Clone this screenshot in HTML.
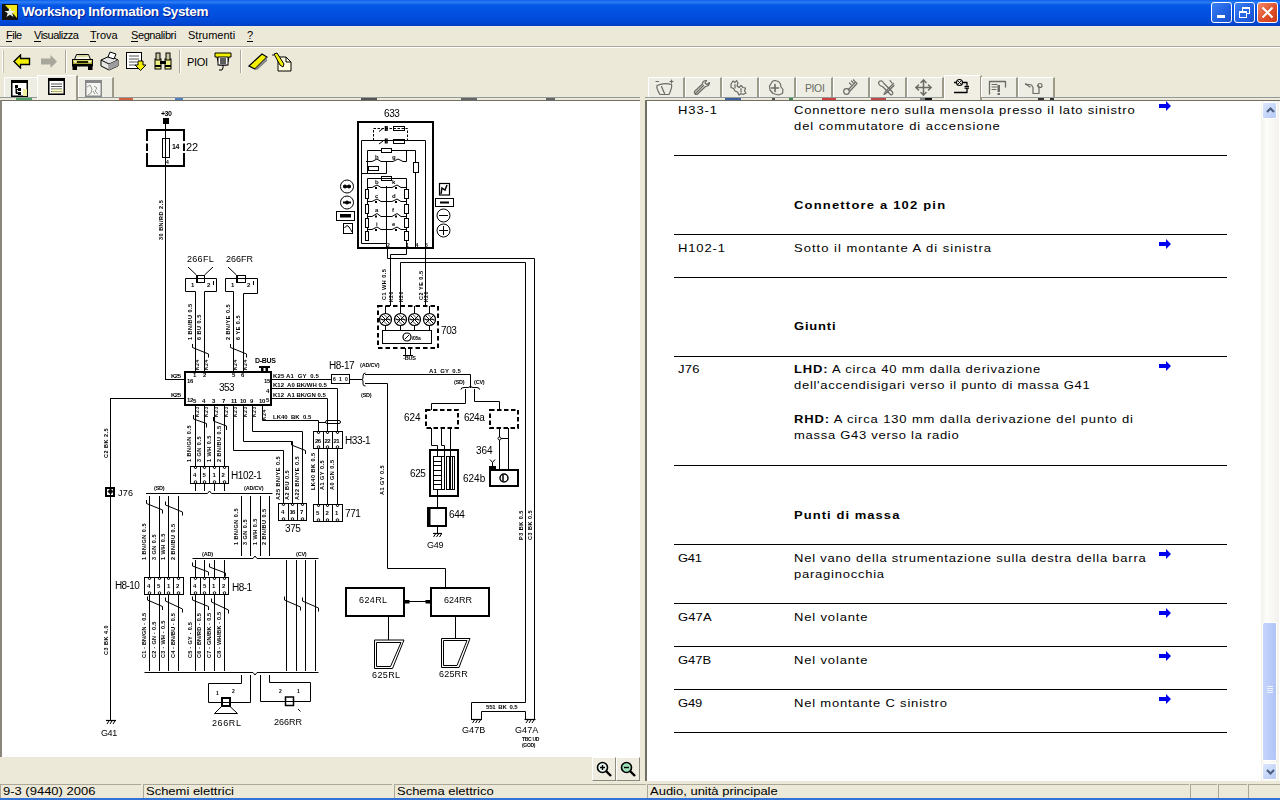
<!DOCTYPE html>
<html><head><meta charset="utf-8">
<style>
*{margin:0;padding:0;box-sizing:border-box}
html,body{width:1280px;height:800px;overflow:hidden;-webkit-font-smoothing:antialiased;background:#ECE9D8;font-family:"Liberation Sans",sans-serif;position:relative}
.a{position:absolute}
#title{left:0;top:0;width:1280px;height:26px;background:linear-gradient(#0A5FEA 0%,#2E7DF6 8%,#0558E6 20%,#0250E0 50%,#0049D6 85%,#003FC4 100%)}
#title .t{left:22px;top:4px;color:#fff;font-weight:bold;font-size:13.5px;letter-spacing:-0.35px;text-shadow:1px 1px 0 #0A1E8C;white-space:nowrap}
.menu{top:29px;font-size:11px;color:#000;white-space:nowrap}
.menu u{text-decoration:none;border-bottom:1px solid #000}
.sep{background:#A0A0A0}
.rt{font-family:"Liberation Sans",sans-serif;font-size:11.5px;color:#000;white-space:nowrap}
.rt b{font-weight:bold}
.hl{left:674px;width:553px;height:2px;background:#000}
.arr{width:12px;height:10px}
.sb{top:784px;height:14px;border-top:1px solid #ACA899;border-left:1px solid #ACA899;font-size:11px;color:#000;white-space:nowrap;padding-left:2px;line-height:13px}
</style></head><body>
<div id="title" class="a">
  <svg class="a" style="left:2px;top:4px" width="16" height="16" viewBox="0 0 16 16"><rect x="0" y="0" width="16" height="16" fill="#111"/><polygon points="3,1 15,1 15,14" fill="#F2E81A"/><polygon points="8,3 9.5,7 13.5,7 10.3,9.3 11.5,13 8,10.8 4.5,13 5.7,9.3 2.5,7 6.5,7" fill="#E8EEE0"/></svg>
  <div class="a t">Workshop Information System</div>
  <!-- window buttons -->
  <div class="a" style="left:1211px;top:2px;width:21px;height:21px;border:1px solid #fff;border-radius:3px;background:linear-gradient(135deg,#3C81F3,#1F5FE0 60%,#1A4FC8)"><div class="a" style="left:5px;top:12px;width:8px;height:3px;background:#fff"></div></div>
  <div class="a" style="left:1234px;top:2px;width:21px;height:21px;border:1px solid #fff;border-radius:3px;background:linear-gradient(135deg,#3C81F3,#1F5FE0 60%,#1A4FC8)"><div class="a" style="left:7px;top:4px;width:8px;height:7px;border:1px solid #fff;border-top-width:2px"></div><div class="a" style="left:4px;top:8px;width:8px;height:7px;border:1px solid #fff;border-top-width:2px;background:#2A66E4"></div></div>
  <div class="a" style="left:1257px;top:2px;width:21px;height:21px;border:1px solid #fff;border-radius:3px;background:linear-gradient(135deg,#F08A6A,#E0502A 55%,#C83C18)"><svg class="a" style="left:3px;top:3px" width="13" height="13"><path d="M1.5 1.5L11.5 11.5M11.5 1.5L1.5 11.5" stroke="#fff" stroke-width="2"/></svg></div>
</div>
<!-- menu -->
<div class="a menu" style="left:6px;letter-spacing:-0.5px"><u>F</u>ile</div>
<div class="a menu" style="left:34px;letter-spacing:-0.5px"><u>V</u>isualizza</div>
<div class="a menu" style="left:90px"><u>T</u>rova</div>
<div class="a menu" style="left:131px;letter-spacing:-0.4px"><u>S</u>egnalibri</div>
<div class="a menu" style="left:188px">St<u>r</u>umenti</div>
<div class="a menu" style="left:247px"><u>?</u></div>
<div class="a" style="left:0;top:46px;width:1280px;height:1px;background:#ACA899"></div>
<div class="a" style="left:0;top:47px;width:1280px;height:1px;background:#fff"></div>


<!-- toolbar -->
<div class="a" style="left:2px;top:50px;width:2px;height:23px;background:#fff;border-right:1px solid #C5C2B2"></div>
<svg class="a" style="left:13px;top:54px" width="18" height="15" viewBox="0 0 18 15"><path d="M1 7.5L7.5 1V4.5H16.5V10.5H7.5V14Z" fill="#F4F000" stroke="#000" stroke-width="1.4" stroke-linejoin="miter"/></svg>
<svg class="a" style="left:40px;top:54px" width="18" height="15" viewBox="0 0 18 15"><path d="M17 7.5L10.5 1V4.5H1V10.5H10.5V14Z" fill="#A8A79C"/></svg>
<div class="a" style="left:65px;top:50px;width:1px;height:23px;background:#ACA899"></div>
<div class="a" style="left:66px;top:50px;width:1px;height:23px;background:#fff"></div>
<svg class="a" style="left:72px;top:53px" width="21" height="17" viewBox="0 0 21 17"><path d="M4.5 1.5H16.5L18.5 6.5H2.5Z" fill="#F4F4E0" stroke="#000" stroke-width="1"/><path d="M5.5 3H15.5" stroke="#B8B860"/><rect x="0.5" y="6.5" width="20" height="5" fill="#A8A830" stroke="#000"/><rect x="1" y="7" width="19" height="1.5" fill="#D8D860"/><rect x="5" y="8" width="11" height="2" fill="#202000"/><rect x="0" y="11" width="21" height="2.5" fill="#000"/><rect x="0.5" y="13" width="4.5" height="4" fill="#000"/><rect x="16" y="13" width="4.5" height="4" fill="#000"/><rect x="2" y="8" width="2.5" height="1.5" fill="#fff"/><rect x="16.5" y="8" width="2.5" height="1.5" fill="#fff"/></svg>
<svg class="a" style="left:99px;top:51px" width="20" height="20" viewBox="0 0 20 20"><path d="M2 9L11 5L19 9V15L10 19L2 15Z" fill="#E6E6E6" stroke="#000" stroke-width="1"/><path d="M2 9L10 13L19 9" fill="none" stroke="#000" stroke-width="1"/><path d="M10 13V19" stroke="#777"/><path d="M10 13L19 9V15L10 19Z" fill="#9C9C9C"/><path d="M11 1L17 3L15 8L9 6Z" fill="#fff" stroke="#000" stroke-width="1"/></svg>
<svg class="a" style="left:126px;top:52px" width="21" height="19" viewBox="0 0 21 19"><rect x="0.5" y="0.5" width="15" height="16" fill="#fff" stroke="#000"/><path d="M3 4H13M3 7H13M3 10H11M3 13H9" stroke="#555"/><path d="M12 9H17V13H20L14.5 18.5L9 13H12Z" fill="#F4F000" stroke="#000"/></svg>
<svg class="a" style="left:154px;top:52px" width="18" height="18" viewBox="0 0 18 18"><rect x="1" y="7" width="6" height="10" fill="#F0F080" stroke="#000"/><rect x="11" y="7" width="6" height="10" fill="#F0F080" stroke="#000"/><rect x="2" y="1" width="4" height="7" fill="#C8C8A0" stroke="#000"/><rect x="12" y="1" width="4" height="7" fill="#C8C8A0" stroke="#000"/><rect x="6" y="9" width="6" height="3" fill="#000"/><rect x="1" y="13" width="6" height="2" fill="#000"/><rect x="11" y="13" width="6" height="2" fill="#000"/></svg>
<div class="a" style="left:179px;top:50px;width:1px;height:23px;background:#ACA899"></div>
<div class="a" style="left:180px;top:50px;width:1px;height:23px;background:#fff"></div>
<div class="a" style="left:187px;top:56px;font-size:11px;color:#000;letter-spacing:-0.3px">PIOI</div>
<svg class="a" style="left:214px;top:52px" width="18" height="20" viewBox="0 0 18 20"><path d="M1 1H17V5H15L13 13H5L3 5H1Z" fill="#F0F000" stroke="#000"/><rect x="4" y="5" width="10" height="8" fill="#fff" stroke="#000"/><path d="M6 7H12M6 9H12M6 11H12M7 6V12M9 6V12M11 6V12" stroke="#000" stroke-width="0.8"/><path d="M9 13V16Q9 19 5 18" fill="none" stroke="#000"/></svg>
<div class="a" style="left:240px;top:50px;width:1px;height:23px;background:#ACA899"></div>
<div class="a" style="left:241px;top:50px;width:1px;height:23px;background:#fff"></div>
<svg class="a" style="left:248px;top:52px" width="20" height="18" viewBox="0 0 20 18"><path d="M1 14L14 2L19 5L7 17Z" fill="#F4F000" stroke="#000" stroke-width="1.2"/><path d="M7 17L19 5L19 9L9 18Z" fill="#888"/></svg>
<svg class="a" style="left:272px;top:52px" width="20" height="20" viewBox="0 0 20 20"><path d="M6 5H14L19 10V19H6Z" fill="#FFFFE0" stroke="#000"/><path d="M14 5V10H19" fill="none" stroke="#000"/><path d="M2 2L5 1L12 12L11 15L8 13Z" fill="#F0F000" stroke="#000"/><circle cx="1" cy="3" r="0.8" fill="#000"/></svg>

<!-- left tabs -->
<div class="a" style="left:0;top:97px;width:640px;height:1px;background:#919B9C"></div>
<div class="a" style="left:4px;top:77px;width:34px;height:20px;background:#EEEDE3;border-left:1px solid #fff;border-top:1px solid #fff;border-right:1px solid #C8C4B4"></div>
<div class="a" style="left:78px;top:77px;width:36px;height:20px;background:#EEEDE3;border-left:1px solid #fff;border-top:1px solid #fff;border-right:2px solid #9D9A8A"></div>
<div class="a" style="left:37px;top:75px;width:41px;height:25px;background:#F1EFE4;border-left:1px solid #fff;border-top:1px solid #fff;border-right:2px solid #9D9A8A"></div>
<svg class="a" style="left:11px;top:80px" width="17" height="17" viewBox="0 0 17 17"><rect x="0.75" y="0.75" width="15.5" height="15.5" fill="#fff" stroke="#000" stroke-width="1.5"/><rect x="1" y="1" width="15" height="2" fill="#000"/><rect x="12" y="9" width="4" height="7" fill="#F0F0A0"/><rect x="4" y="5" width="3" height="3" fill="#000"/><rect x="7" y="8" width="3" height="3" fill="#000"/><rect x="7" y="12" width="3" height="3" fill="#000"/><path d="M5 8V13.5H7M5 9.5H7" stroke="#000"/></svg>
<svg class="a" style="left:48px;top:78px" width="17" height="17" viewBox="0 0 17 17"><rect x="0.75" y="0.75" width="15.5" height="15.5" fill="#fff" stroke="#000" stroke-width="1.5"/><rect x="1" y="1" width="15" height="2" fill="#000"/><path d="M3 6H14M3 8.5H14M3 11H14M3 13.5H14" stroke="#555"/><rect x="4" y="11" width="11" height="4" fill="#F0F0A0" opacity="0.6"/></svg>
<svg class="a" style="left:85px;top:80px" width="17" height="17" viewBox="0 0 17 17"><rect x="0.75" y="0.75" width="15.5" height="15.5" fill="#F4F4F0" stroke="#888" stroke-width="1.5"/><rect x="1" y="1" width="15" height="2" fill="#888"/><path d="M2 7L5 5L7 9L6 13L3 15M9 6L12 8L10 11L13 14M8 11L10 14" fill="none" stroke="#999" stroke-width="1"/></svg>

<!-- right tabs -->
<div class="a" style="left:645px;top:97px;width:635px;height:1px;background:#919B9C"></div>
<div class="a" style="left:648px;top:77px;width:37px;height:20px;background:#EEEDE3;border-left:1px solid #fff;border-top:1px solid #fff;border-right:2px solid #9D9A8A"></div>
<div class="a" style="left:685px;top:77px;width:37px;height:20px;background:#EEEDE3;border-left:1px solid #fff;border-top:1px solid #fff;border-right:2px solid #9D9A8A"></div>
<div class="a" style="left:722px;top:77px;width:37px;height:20px;background:#EEEDE3;border-left:1px solid #fff;border-top:1px solid #fff;border-right:2px solid #9D9A8A"></div>
<div class="a" style="left:759px;top:77px;width:37px;height:20px;background:#EEEDE3;border-left:1px solid #fff;border-top:1px solid #fff;border-right:2px solid #9D9A8A"></div>
<div class="a" style="left:796px;top:77px;width:37px;height:20px;background:#EEEDE3;border-left:1px solid #fff;border-top:1px solid #fff;border-right:2px solid #9D9A8A"></div>
<div class="a" style="left:833px;top:77px;width:37px;height:20px;background:#EEEDE3;border-left:1px solid #fff;border-top:1px solid #fff;border-right:2px solid #9D9A8A"></div>
<div class="a" style="left:870px;top:77px;width:37px;height:20px;background:#EEEDE3;border-left:1px solid #fff;border-top:1px solid #fff;border-right:2px solid #9D9A8A"></div>
<div class="a" style="left:907px;top:77px;width:37px;height:20px;background:#EEEDE3;border-left:1px solid #fff;border-top:1px solid #fff;border-right:2px solid #9D9A8A"></div>
<div class="a" style="left:944px;top:75px;width:38px;height:25px;background:#F1EFE4;border-left:1px solid #fff;border-top:1px solid #fff;border-right:2px solid #9D9A8A"></div>
<div class="a" style="left:981px;top:77px;width:37px;height:20px;background:#EEEDE3;border-left:1px solid #fff;border-top:1px solid #fff;border-right:2px solid #9D9A8A"></div>
<div class="a" style="left:1018px;top:77px;width:37px;height:20px;background:#EEEDE3;border-left:1px solid #fff;border-top:1px solid #fff;border-right:2px solid #9D9A8A"></div>
<svg class="a" style="left:645px;top:74px" width="420" height="26" viewBox="645 74 420 26" fill="none" stroke="#6A6A66" stroke-width="1.2" stroke-linejoin="round" stroke-linecap="round">
<path d="M657,85.5 Q664,82.5 671.5,84.5 Q672.5,87 669,94.5 H660 Q656,88 657,85.5Z"/><path d="M661.5,86.5 L664.5,93.5"/><path d="M656,81.5H658.5M670,81.5H673M671.5,80V83"/>
<path d="M695.5,93.5 L703.5,85.5 M694.5,91.5 Q694,94.5 697,94.5 L705.5,86.5 Q709.5,86 709.5,82.5 L707,84.5 L705,83 L706.5,80.5 Q702.5,80.5 702.5,84 L694.5,91.5"/>
<path d="M731,84 L733,81 L735,82.5 L736.5,80.5 L738,83 L737,86 L739,87.5 L741,85.5 L743,87.5 L745.5,88 L744.5,91 L746,93 L743,94.5 L741,93.5 L739,95 L737.5,92 L735,91 L733.5,88.5 L731,87.5Z"/><path d="M735,84.5V88M741,88.5V92"/>
<path d="M771.5,83 Q772,80.5 775,80.5 L778.5,81.5 L780.5,84 L781,87 L783,89.5 L782.5,93.5 L778.5,95 L773,93.5 L770,90 L769.5,86Z"/><path d="M771.5,88H778.5M775,84.5V91.5" stroke-width="1.6"/>
<text x="805" y="92.3" font-size="10.5" fill="#6A6A66" stroke="none" font-family="Liberation Sans" letter-spacing="-0.4">PIOI</text>
<circle cx="846.5" cy="91.5" r="2.8"/><path d="M848.5,89.5 L855.5,82 L857,83.5 L850,91"/><path d="M851,84.5L849.5,83M853,82.5L851.5,81M854.5,81L853.5,79.8"/>
<path d="M878.5,82.5 Q879.5,80.5 882,81 L884,83.5 L892.5,92 Q893.5,94.5 891,95 L882.5,86.5 Q879,86 878.5,82.5Z"/><path d="M893.5,83.5 L885.5,91.5 L884,94.5 L886.5,93 L894,85.5"/><path d="M890,80.5 L892,83"/>
<path d="M923.5,80V95M916,87.5H931" stroke-width="1.5"/><path d="M921,82.5L923.5,80L926,82.5M921,92.5L923.5,95L926,92.5M918.5,85L916,87.5L918.5,90M928.5,85L931,87.5L928.5,90" stroke-width="1.5"/>
<g stroke="#000" stroke-width="1.3" stroke-linecap="butt"><circle cx="959.5" cy="82.5" r="3" stroke-width="1.1"/><path d="M957.5,80.5L961.5,84.5M961.5,80.5L957.5,84.5" stroke-width="0.9"/><path d="M954,82.5H956.5M962.5,82.5H967V85.5M964.5,86.3H969M964.5,88.2H969M967,88.5V92.5H954"/></g>
<path d="M989.5,94V81.5H1005.5V87" stroke-width="1.3"/><path d="M992,84.5H997M992,87H997M992,89.5H996" stroke-width="1"/><rect x="997.5" y="85" width="2.5" height="7" fill="#6A6A66" stroke="none"/><rect x="997.5" y="93" width="2.5" height="2" fill="#6A6A66" stroke="none"/>
<path d="M1025.5,84 L1031.5,85 L1033,87.5 V93.5 H1039 V86.5 L1037.5,85.5"/><circle cx="1040" cy="85.5" r="2"/><path d="M1025.5,84 L1030,87"/>
</svg>
<div class="a" style="left:725px;top:98px;width:16px;height:2px;background:#3F5FA0"></div>
<div class="a" style="left:772px;top:98px;width:3px;height:2px;background:#555"></div><div class="a" style="left:789px;top:98px;width:4px;height:2px;background:#3A8A50"></div>
<div class="a" style="left:822px;top:98px;width:14px;height:2px;background:#D04040"></div>
<div class="a" style="left:871px;top:98px;width:15px;height:2px;background:#C04848"></div>
<div class="a" style="left:920px;top:98px;width:5px;height:2px;background:#888"></div><div class="a" style="left:925px;top:98px;width:7px;height:2px;background:#111"></div>
<div class="a" style="left:1038px;top:98px;width:6px;height:2px;background:#333"></div><div class="a" style="left:1050px;top:98px;width:4px;height:2px;background:#333"></div>
<div class="a" style="left:16px;top:98px;width:16px;height:2px;background:#4CA060"></div>
<div class="a" style="left:119px;top:98px;width:14px;height:2px;background:#D06040"></div>
<div class="a" style="left:175px;top:98px;width:8px;height:2px;background:#5080C0"></div>
<div class="a" style="left:361px;top:98px;width:16px;height:2px;background:#555"></div>
<div class="a" style="left:461px;top:98px;width:16px;height:2px;background:#666"></div>
<div class="a" style="left:546px;top:98px;width:9px;height:2px;background:#666"></div>
<!-- left pane -->
<div class="a" style="left:0;top:100px;width:640px;height:657px;background:#fff;border-top:1px solid #716F64;border-left:2px solid #8A877A"></div>
<!-- right pane -->
<div class="a" style="left:645px;top:100px;width:635px;height:681px;background:#fff;border-top:1px solid #716F64;border-left:2px solid #716F64"></div>

<svg class="a" style="left:0;top:0;will-change:transform" width="640" height="757" viewBox="0 0 640 757" font-family="Liberation Sans, sans-serif" stroke="#000" fill="none" stroke-linecap="butt"><text x="161" y="116" font-size="7" font-weight="bold" letter-spacing="-0.5" stroke="none" fill="#000" style="white-space:pre">+30</text>
<rect x="163" y="118" width="6" height="6" fill="#000" stroke="none"/>
<rect x="147" y="130" width="37" height="36" stroke-width="2" fill="none"/>
<rect x="145" y="141" width="4" height="2.5" fill="#fff" stroke="none"/>
<rect x="145" y="151" width="4" height="2" fill="#fff" stroke="none"/>
<rect x="182" y="141" width="4" height="2.5" fill="#fff" stroke="none"/>
<rect x="182" y="151" width="4" height="2" fill="#fff" stroke="none"/>
<rect x="162.5" y="138.5" width="7.0" height="19.0" stroke-width="1" fill="none"/>
<text x="172" y="149" font-size="7" font-weight="bold" letter-spacing="-0.5" stroke="none" fill="#000" style="white-space:pre">14</text>
<text x="186" y="151" font-size="11" font-weight="normal" letter-spacing="0" stroke="none" fill="#000" style="white-space:pre">22</text>
<text x="166" y="164" font-size="5" font-weight="bold" letter-spacing="0" stroke="none" fill="#000" style="white-space:pre">4</text>
<line x1="165.5" y1="120" x2="165.5" y2="380" stroke-width="1"/>
<line x1="165" y1="379.5" x2="185" y2="379.5" stroke-width="1"/>
<text transform="translate(163,240) rotate(-90)" font-size="5.5" font-weight="bold" letter-spacing="0.5" stroke="none" fill="#000">30 BN/RD 2.5</text>
<text x="187" y="262" font-size="9" font-weight="normal" letter-spacing="0.3" stroke="none" fill="#000" style="white-space:pre">266FL</text>
<text x="226" y="262" font-size="9" font-weight="normal" letter-spacing="0.0" stroke="none" fill="#000" style="white-space:pre">266FR</text>
<rect x="197.5" y="275.5" width="7.0" height="7.0" stroke-width="1" fill="none"/>
<rect x="196" y="275" width="2" height="8" fill="#000" stroke="none"/>
<line x1="188" y1="267" x2="196.5" y2="275" stroke-width="1"/>
<line x1="213" y1="267" x2="204.5" y2="275" stroke-width="1"/>
<polyline points="195.5,371 195.5,291.5 185.5,291.5 185.5,278.5 216.5,278.5 216.5,291.5 204.5,291.5 204.5,371" stroke-width="1"/>
<text x="191" y="287" font-size="6" font-weight="bold" letter-spacing="0" stroke="none" fill="#000" style="white-space:pre">1</text>
<text x="207" y="287" font-size="6" font-weight="bold" letter-spacing="0" stroke="none" fill="#000" style="white-space:pre">2</text>
<line x1="213.5" y1="281" x2="213.5" y2="285" stroke-width="1"/>
<rect x="237.5" y="275.5" width="8.0" height="7.0" stroke-width="1" fill="none"/>
<rect x="236" y="275" width="2" height="8" fill="#000" stroke="none"/>
<line x1="228" y1="267" x2="236.5" y2="275" stroke-width="1"/>
<polyline points="233.5,371 233.5,291.5 225.5,291.5 225.5,278.5 257.5,278.5 257.5,293.5 243.5,293.5 243.5,371" stroke-width="1"/>
<text x="231" y="287" font-size="6" font-weight="bold" letter-spacing="0" stroke="none" fill="#000" style="white-space:pre">1</text>
<text x="247" y="287" font-size="6" font-weight="bold" letter-spacing="0" stroke="none" fill="#000" style="white-space:pre">2</text>
<line x1="253.5" y1="281" x2="253.5" y2="285" stroke-width="1"/>
<polyline points="192.5,344.0 192.5,347.5 208.5,354 208.5,357.5" stroke-width="1"/>
<polyline points="230.5,344.0 230.5,347.5 246.5,354 246.5,357.5" stroke-width="1"/>
<text transform="translate(192,340) rotate(-90)" font-size="5.5" font-weight="bold" letter-spacing="0.5" stroke="none" fill="#000">1 BN/BU 0.5</text>
<text transform="translate(201,340) rotate(-90)" font-size="5.5" font-weight="bold" letter-spacing="0.5" stroke="none" fill="#000">6 BU 0.5</text>
<text transform="translate(230,340) rotate(-90)" font-size="5.5" font-weight="bold" letter-spacing="0.5" stroke="none" fill="#000">2 BN/YE 0.5</text>
<text transform="translate(240,340) rotate(-90)" font-size="5.5" font-weight="bold" letter-spacing="0.5" stroke="none" fill="#000">6 YE 0.5</text>
<text transform="translate(199,370) rotate(-90)" font-size="5" font-weight="bold" letter-spacing="0.5" stroke="none" fill="#000">K24</text>
<text transform="translate(208,370) rotate(-90)" font-size="5" font-weight="bold" letter-spacing="0.5" stroke="none" fill="#000">K24</text>
<text transform="translate(237,370) rotate(-90)" font-size="5" font-weight="bold" letter-spacing="0.5" stroke="none" fill="#000">K24</text>
<text transform="translate(247,370) rotate(-90)" font-size="5" font-weight="bold" letter-spacing="0.5" stroke="none" fill="#000">K24</text>
<text x="255" y="363" font-size="7" font-weight="bold" letter-spacing="-0.3" stroke="none" fill="#000" style="white-space:pre">D-BUS</text>
<rect x="259" y="366" width="11" height="2" fill="#000" stroke="none"/>
<rect x="261" y="368" width="2.5" height="3" fill="#000" stroke="none"/>
<rect x="265.5" y="368" width="2.5" height="3" fill="#000" stroke="none"/>
<rect x="185" y="372" width="86" height="33" stroke-width="2" fill="none"/>
<text x="219" y="391" font-size="10" font-weight="normal" letter-spacing="-0.5" stroke="none" fill="#000" style="white-space:pre">353</text>
<text x="187" y="383" font-size="6" font-weight="bold" letter-spacing="-0.3" stroke="none" fill="#000" style="white-space:pre">16</text>
<text x="193" y="377" font-size="6" font-weight="bold" letter-spacing="-0.3" stroke="none" fill="#000" style="white-space:pre">1</text>
<text x="203" y="377" font-size="6" font-weight="bold" letter-spacing="-0.3" stroke="none" fill="#000" style="white-space:pre">2</text>
<text x="232" y="377" font-size="6" font-weight="bold" letter-spacing="-0.3" stroke="none" fill="#000" style="white-space:pre">5</text>
<text x="241" y="377" font-size="6" font-weight="bold" letter-spacing="-0.3" stroke="none" fill="#000" style="white-space:pre">6</text>
<text x="264" y="383" font-size="6" font-weight="bold" letter-spacing="-0.3" stroke="none" fill="#000" style="white-space:pre">15</text>
<text x="266" y="393" font-size="6" font-weight="bold" letter-spacing="-0.3" stroke="none" fill="#000" style="white-space:pre">4</text>
<text x="266" y="402" font-size="6" font-weight="bold" letter-spacing="-0.3" stroke="none" fill="#000" style="white-space:pre">5</text>
<text x="187" y="402" font-size="6" font-weight="bold" letter-spacing="-0.3" stroke="none" fill="#000" style="white-space:pre">12</text>
<text x="193" y="403" font-size="6" font-weight="bold" letter-spacing="-0.3" stroke="none" fill="#000" style="white-space:pre">5</text>
<text x="202" y="403" font-size="6" font-weight="bold" letter-spacing="-0.3" stroke="none" fill="#000" style="white-space:pre">4</text>
<text x="212" y="403" font-size="6" font-weight="bold" letter-spacing="-0.3" stroke="none" fill="#000" style="white-space:pre">3</text>
<text x="222" y="403" font-size="6" font-weight="bold" letter-spacing="-0.3" stroke="none" fill="#000" style="white-space:pre">7</text>
<text x="231" y="403" font-size="6" font-weight="bold" letter-spacing="-0.3" stroke="none" fill="#000" style="white-space:pre">11</text>
<text x="240" y="403" font-size="6" font-weight="bold" letter-spacing="-0.3" stroke="none" fill="#000" style="white-space:pre">10</text>
<text x="250" y="403" font-size="6" font-weight="bold" letter-spacing="-0.3" stroke="none" fill="#000" style="white-space:pre">9</text>
<text x="259" y="403" font-size="6" font-weight="bold" letter-spacing="-0.3" stroke="none" fill="#000" style="white-space:pre">10</text>
<text x="171" y="378" font-size="6" font-weight="bold" letter-spacing="-0.5" stroke="none" fill="#000" style="white-space:pre">K25</text>
<text x="171" y="397" font-size="6" font-weight="bold" letter-spacing="-0.5" stroke="none" fill="#000" style="white-space:pre">K25</text>
<line x1="110" y1="398.5" x2="185" y2="398.5" stroke-width="1"/>
<line x1="110.5" y1="398" x2="110.5" y2="721" stroke-width="1"/>
<text transform="translate(108,458) rotate(-90)" font-size="5.5" font-weight="bold" letter-spacing="0.5" stroke="none" fill="#000">C2 BK 2.5</text>
<text transform="translate(108,655) rotate(-90)" font-size="5.5" font-weight="bold" letter-spacing="0.5" stroke="none" fill="#000">C3 BK 4.0</text>
<rect x="106" y="488" width="8" height="8" stroke-width="2" fill="none"/>
<polygon points="110.5,489 113,491.5 110.5,494 108,491.5" stroke-width="1" fill="#000"/>
<text x="118" y="496" font-size="9" font-weight="normal" letter-spacing="0.2" stroke="none" fill="#000" style="white-space:pre">J76</text>
<line x1="106" y1="720.5" x2="116" y2="720.5" stroke-width="1.2"/>
<line x1="109" y1="721" x2="107" y2="724" stroke-width="1"/>
<line x1="112" y1="721" x2="110" y2="724" stroke-width="1"/>
<line x1="115" y1="721" x2="113" y2="724" stroke-width="1"/>
<text x="101" y="736" font-size="9" font-weight="normal" letter-spacing="-0.4" stroke="none" fill="#000" style="white-space:pre">G41</text>
<line x1="271" y1="379.5" x2="332" y2="379.5" stroke-width="1"/>
<text x="273" y="378" font-size="6" font-weight="bold" letter-spacing="0.15" stroke="none" fill="#000" style="white-space:pre">K25 A1  GY  0.5</text>
<polyline points="271,388.5 337.5,388.5 337.5,432" stroke-width="1"/>
<text x="273" y="387" font-size="6" font-weight="bold" letter-spacing="0.0" stroke="none" fill="#000" style="white-space:pre">K12  A0 BK/WH 0.5</text>
<polyline points="271,398.5 327.5,398.5 327.5,432" stroke-width="1"/>
<text x="273" y="397" font-size="6" font-weight="bold" letter-spacing="0.0" stroke="none" fill="#000" style="white-space:pre">K12  A1 BK/GN 0.5</text>
<rect x="331.5" y="374.5" width="18.0" height="9.0" stroke-width="1" fill="none"/>
<text x="333" y="381" font-size="5" font-weight="bold" letter-spacing="0" stroke="none" fill="#000" style="white-space:pre">6</text>
<text x="339" y="381" font-size="5" font-weight="bold" letter-spacing="0" stroke="none" fill="#000" style="white-space:pre">1</text>
<text x="345" y="381" font-size="5" font-weight="bold" letter-spacing="0" stroke="none" fill="#000" style="white-space:pre">0</text>
<text x="329" y="369" font-size="10" font-weight="normal" letter-spacing="-0.4" stroke="none" fill="#000" style="white-space:pre">H8-17</text>
<text x="360" y="367" font-size="5.5" font-weight="bold" letter-spacing="-0.2" stroke="none" fill="#000" style="white-space:pre">(AD/CV)</text>
<line x1="349.5" y1="379.5" x2="362" y2="379.5" stroke-width="1"/>
<path d="M365.5,373 Q363,373 363,376 L363,378 Q363,379.5 361.5,379.5 Q363,379.5 363,381 L363,384 Q363,386 365.5,386" fill="none" stroke-width="1"/>
<polyline points="365,374.5 470.5,374.5 470.5,388" stroke-width="1"/>
<polyline points="365,383.5 387.5,383.5 387.5,568.5 445.5,568.5 445.5,587" stroke-width="1"/>
<text x="361" y="397" font-size="5.5" font-weight="bold" letter-spacing="-0.2" stroke="none" fill="#000" style="white-space:pre">(SD)</text>
<text x="429" y="373" font-size="6" font-weight="bold" letter-spacing="0.05" stroke="none" fill="#000" style="white-space:pre">A1  GY  0.5</text>
<polyline points="262.5,405 262.5,420.5 318.5,420.5 318.5,432" stroke-width="1"/>
<text x="273" y="419" font-size="6" font-weight="bold" letter-spacing="0.0" stroke="none" fill="#000" style="white-space:pre">LK40  BK  0.5</text>
<line x1="318.5" y1="422.5" x2="325.5" y2="422.5" stroke-width="1"/>
<rect x="325.5" y="420.5" width="15" height="3" rx="1.5" stroke-width="1" fill="none"/>
<polyline points="252.5,405 252.5,431.5 302.5,431.5 302.5,504" stroke-width="1"/>
<polyline points="243.5,405 243.5,441.5 292.5,441.5 292.5,504" stroke-width="1"/>
<polyline points="233.5,405 233.5,450.5 283.5,450.5 283.5,504" stroke-width="1"/>
<polyline points="291.5,441.5 291.5,445 305.5,450.5 305.5,454.0" stroke-width="1"/>
<line x1="195.5" y1="405" x2="195.5" y2="467" stroke-width="1"/>
<line x1="204.5" y1="405" x2="204.5" y2="467" stroke-width="1"/>
<line x1="214.5" y1="405" x2="214.5" y2="467" stroke-width="1"/>
<line x1="224.5" y1="405" x2="224.5" y2="467" stroke-width="1"/>
<polyline points="193.5,415 193.5,419 206.5,423.5 206.5,427.5" stroke-width="1"/>
<polyline points="213.5,417 213.5,421 226.5,426 226.5,430" stroke-width="1"/>
<text transform="translate(199,417) rotate(-90)" font-size="5" font-weight="bold" letter-spacing="0.5" stroke="none" fill="#000">K23</text>
<text transform="translate(208,417) rotate(-90)" font-size="5" font-weight="bold" letter-spacing="0.5" stroke="none" fill="#000">K23</text>
<text transform="translate(218,417) rotate(-90)" font-size="5" font-weight="bold" letter-spacing="0.5" stroke="none" fill="#000">K23</text>
<text transform="translate(228,417) rotate(-90)" font-size="5" font-weight="bold" letter-spacing="0.5" stroke="none" fill="#000">K23</text>
<text transform="translate(237,417) rotate(-90)" font-size="5" font-weight="bold" letter-spacing="0.5" stroke="none" fill="#000">K23</text>
<text transform="translate(247,417) rotate(-90)" font-size="5" font-weight="bold" letter-spacing="0.5" stroke="none" fill="#000">K23</text>
<text transform="translate(256,417) rotate(-90)" font-size="5" font-weight="bold" letter-spacing="0.5" stroke="none" fill="#000">K23</text>
<text transform="translate(266,420) rotate(-90)" font-size="5" font-weight="bold" letter-spacing="0.5" stroke="none" fill="#000">K24</text>
<text transform="translate(191,462) rotate(-90)" font-size="5.5" font-weight="bold" letter-spacing="0.5" stroke="none" fill="#000">1 BN/GN 0.5</text>
<text transform="translate(201,462) rotate(-90)" font-size="5.5" font-weight="bold" letter-spacing="0.5" stroke="none" fill="#000">3 GN 0.5</text>
<text transform="translate(211,462) rotate(-90)" font-size="5.5" font-weight="bold" letter-spacing="0.5" stroke="none" fill="#000">1 WH 0.5</text>
<text transform="translate(221,462) rotate(-90)" font-size="5.5" font-weight="bold" letter-spacing="0.5" stroke="none" fill="#000">2 BN/BU 0.5</text>
<text transform="translate(280,500) rotate(-90)" font-size="5.5" font-weight="bold" letter-spacing="0.5" stroke="none" fill="#000">A25 BN/YE 0.5</text>
<text transform="translate(289,500) rotate(-90)" font-size="5.5" font-weight="bold" letter-spacing="0.5" stroke="none" fill="#000">A2 BU 0.5</text>
<text transform="translate(299,500) rotate(-90)" font-size="5.5" font-weight="bold" letter-spacing="0.5" stroke="none" fill="#000">A22 BN/YE 0.5</text>
<text transform="translate(315,490) rotate(-90)" font-size="5.5" font-weight="bold" letter-spacing="0.5" stroke="none" fill="#000">LK40 BK 0.5</text>
<text transform="translate(324,490) rotate(-90)" font-size="5.5" font-weight="bold" letter-spacing="0.5" stroke="none" fill="#000">A1 GY 0.5</text>
<text transform="translate(334,490) rotate(-90)" font-size="5.5" font-weight="bold" letter-spacing="0.5" stroke="none" fill="#000">A0 GN 0.5</text>
<rect x="313.5" y="431.5" width="29.0" height="17.0" stroke-width="1" fill="none"/>
<line x1="323.5" y1="431.5" x2="323.5" y2="448.5" stroke-width="1"/>
<line x1="332.5" y1="431.5" x2="332.5" y2="448.5" stroke-width="1"/>
<text x="315" y="443" font-size="6" font-weight="bold" letter-spacing="-0.5" stroke="none" fill="#000" style="white-space:pre">26</text>
<text x="324.5" y="443" font-size="6" font-weight="bold" letter-spacing="-0.5" stroke="none" fill="#000" style="white-space:pre">22</text>
<text x="333.5" y="443" font-size="6" font-weight="bold" letter-spacing="-0.5" stroke="none" fill="#000" style="white-space:pre">21</text>
<text x="345" y="444" font-size="10" font-weight="normal" letter-spacing="-0.4" stroke="none" fill="#000" style="white-space:pre">H33-1</text>
<polyline points="317.0,432.0 318.5,434.0 320.0,432.0" stroke-width="1"/>
<circle cx="318.5" cy="447.0" r="1.3" stroke-width="0.9" fill="none"/>
<polyline points="326.0,432.0 327.5,434.0 329.0,432.0" stroke-width="1"/>
<circle cx="327.5" cy="447.0" r="1.3" stroke-width="0.9" fill="none"/>
<polyline points="336.0,432.0 337.5,434.0 339.0,432.0" stroke-width="1"/>
<circle cx="337.5" cy="447.0" r="1.3" stroke-width="0.9" fill="none"/>
<line x1="318.5" y1="448.5" x2="318.5" y2="505" stroke-width="1"/>
<line x1="327.5" y1="448.5" x2="327.5" y2="505" stroke-width="1"/>
<line x1="337.5" y1="448.5" x2="337.5" y2="505" stroke-width="1"/>
<rect x="313.5" y="504.5" width="29.0" height="17.0" stroke-width="1" fill="none"/>
<line x1="323.5" y1="504.5" x2="323.5" y2="521.5" stroke-width="1"/>
<line x1="332.5" y1="504.5" x2="332.5" y2="521.5" stroke-width="1"/>
<text x="316" y="515" font-size="6" font-weight="bold" letter-spacing="0" stroke="none" fill="#000" style="white-space:pre">5</text>
<text x="325.5" y="515" font-size="6" font-weight="bold" letter-spacing="0" stroke="none" fill="#000" style="white-space:pre">2</text>
<text x="335" y="515" font-size="6" font-weight="bold" letter-spacing="0" stroke="none" fill="#000" style="white-space:pre">1</text>
<text x="345" y="517" font-size="10" font-weight="normal" letter-spacing="-0.4" stroke="none" fill="#000" style="white-space:pre">771</text>
<polyline points="317.0,505.0 318.5,507.0 320.0,505.0" stroke-width="1"/>
<circle cx="318.5" cy="520.0" r="1.3" stroke-width="0.9" fill="none"/>
<polyline points="326.0,505.0 327.5,507.0 329.0,505.0" stroke-width="1"/>
<circle cx="327.5" cy="520.0" r="1.3" stroke-width="0.9" fill="none"/>
<polyline points="336.0,505.0 337.5,507.0 339.0,505.0" stroke-width="1"/>
<circle cx="337.5" cy="520.0" r="1.3" stroke-width="0.9" fill="none"/>
<rect x="278.5" y="503.5" width="28.0" height="17.0" stroke-width="1" fill="none"/>
<line x1="288.5" y1="503.5" x2="288.5" y2="520.5" stroke-width="1"/>
<line x1="297.5" y1="503.5" x2="297.5" y2="520.5" stroke-width="1"/>
<text x="281" y="514" font-size="6" font-weight="bold" letter-spacing="0" stroke="none" fill="#000" style="white-space:pre">4</text>
<text x="289.5" y="514" font-size="6" font-weight="bold" letter-spacing="-0.8" stroke="none" fill="#000" style="white-space:pre">16</text>
<text x="300" y="514" font-size="6" font-weight="bold" letter-spacing="0" stroke="none" fill="#000" style="white-space:pre">7</text>
<text x="285" y="532" font-size="10" font-weight="normal" letter-spacing="-0.4" stroke="none" fill="#000" style="white-space:pre">375</text>
<polyline points="282.0,504.0 283.5,506.0 285.0,504.0" stroke-width="1"/>
<circle cx="283.5" cy="519.0" r="1.3" stroke-width="0.9" fill="none"/>
<polyline points="291.0,504.0 292.5,506.0 294.0,504.0" stroke-width="1"/>
<circle cx="292.5" cy="519.0" r="1.3" stroke-width="0.9" fill="none"/>
<polyline points="301.0,504.0 302.5,506.0 304.0,504.0" stroke-width="1"/>
<circle cx="302.5" cy="519.0" r="1.3" stroke-width="0.9" fill="none"/>
<rect x="190.5" y="466.5" width="38.0" height="17.0" stroke-width="1" fill="none"/>
<line x1="200.5" y1="466.5" x2="200.5" y2="483.5" stroke-width="1"/>
<line x1="209.5" y1="466.5" x2="209.5" y2="483.5" stroke-width="1"/>
<line x1="219.5" y1="466.5" x2="219.5" y2="483.5" stroke-width="1"/>
<text x="193" y="477" font-size="6" font-weight="bold" letter-spacing="0" stroke="none" fill="#000" style="white-space:pre">4</text>
<text x="202.5" y="477" font-size="6" font-weight="bold" letter-spacing="0" stroke="none" fill="#000" style="white-space:pre">5</text>
<text x="212.5" y="477" font-size="6" font-weight="bold" letter-spacing="0" stroke="none" fill="#000" style="white-space:pre">1</text>
<text x="221.5" y="477" font-size="6" font-weight="bold" letter-spacing="0" stroke="none" fill="#000" style="white-space:pre">2</text>
<text x="231" y="479" font-size="10" font-weight="normal" letter-spacing="-0.4" stroke="none" fill="#000" style="white-space:pre">H102-1</text>
<polyline points="194.0,467.0 195.5,469.0 197.0,467.0" stroke-width="1"/>
<circle cx="195.5" cy="482.0" r="1.3" stroke-width="0.9" fill="none"/>
<polyline points="203.0,467.0 204.5,469.0 206.0,467.0" stroke-width="1"/>
<circle cx="204.5" cy="482.0" r="1.3" stroke-width="0.9" fill="none"/>
<polyline points="213.0,467.0 214.5,469.0 216.0,467.0" stroke-width="1"/>
<circle cx="214.5" cy="482.0" r="1.3" stroke-width="0.9" fill="none"/>
<polyline points="223.0,467.0 224.5,469.0 226.0,467.0" stroke-width="1"/>
<circle cx="224.5" cy="482.0" r="1.3" stroke-width="0.9" fill="none"/>
<line x1="195.5" y1="483.5" x2="195.5" y2="491" stroke-width="1"/>
<line x1="204.5" y1="483.5" x2="204.5" y2="491" stroke-width="1"/>
<line x1="214.5" y1="483.5" x2="214.5" y2="491" stroke-width="1"/>
<line x1="224.5" y1="483.5" x2="224.5" y2="491" stroke-width="1"/>
<polyline points="146,493.5 207.5,493.5 209.5,491 211.5,493.5 272.5,493.5" stroke-width="1"/>
<text x="154" y="490" font-size="5.5" font-weight="bold" letter-spacing="-0.2" stroke="none" fill="#000" style="white-space:pre">(SD)</text>
<text x="244" y="490" font-size="5.5" font-weight="bold" letter-spacing="-0.2" stroke="none" fill="#000" style="white-space:pre">(AD/CV)</text>
<line x1="149.5" y1="496" x2="149.5" y2="578" stroke-width="1"/>
<line x1="159.5" y1="496" x2="159.5" y2="578" stroke-width="1"/>
<line x1="168.5" y1="496" x2="168.5" y2="578" stroke-width="1"/>
<line x1="178.5" y1="496" x2="178.5" y2="578" stroke-width="1"/>
<polyline points="146.5,500.0 146.5,503.5 162.5,510 162.5,513.5" stroke-width="1"/>
<polyline points="165.5,501.5 165.5,505 182.5,512 182.5,515.5" stroke-width="1"/>
<text transform="translate(146,560) rotate(-90)" font-size="5.5" font-weight="bold" letter-spacing="0.5" stroke="none" fill="#000">1 BN/GN 0.5</text>
<text transform="translate(156,560) rotate(-90)" font-size="5.5" font-weight="bold" letter-spacing="0.5" stroke="none" fill="#000">3 GN 0.5</text>
<text transform="translate(165,560) rotate(-90)" font-size="5.5" font-weight="bold" letter-spacing="0.5" stroke="none" fill="#000">1 WH 0.5</text>
<text transform="translate(175,560) rotate(-90)" font-size="5.5" font-weight="bold" letter-spacing="0.5" stroke="none" fill="#000">2 BN/BU 0.5</text>
<line x1="241.5" y1="496" x2="241.5" y2="556" stroke-width="1"/>
<line x1="250.5" y1="496" x2="250.5" y2="556" stroke-width="1"/>
<line x1="260.5" y1="496" x2="260.5" y2="556" stroke-width="1"/>
<line x1="269.5" y1="496" x2="269.5" y2="556" stroke-width="1"/>
<text transform="translate(238,545) rotate(-90)" font-size="5.5" font-weight="bold" letter-spacing="0.5" stroke="none" fill="#000">1 BN/GN 0.5</text>
<text transform="translate(247,545) rotate(-90)" font-size="5.5" font-weight="bold" letter-spacing="0.5" stroke="none" fill="#000">3 GN 0.5</text>
<text transform="translate(257,545) rotate(-90)" font-size="5.5" font-weight="bold" letter-spacing="0.5" stroke="none" fill="#000">1 WH 0.5</text>
<text transform="translate(266,545) rotate(-90)" font-size="5.5" font-weight="bold" letter-spacing="0.5" stroke="none" fill="#000">2 BN/BU 0.5</text>
<polyline points="192.5,558.5 253,558.5 255,556 257,558.5 318.5,558.5" stroke-width="1"/>
<text x="202" y="556" font-size="5.5" font-weight="bold" letter-spacing="-0.2" stroke="none" fill="#000" style="white-space:pre">(AD)</text>
<text x="296" y="556" font-size="5.5" font-weight="bold" letter-spacing="-0.2" stroke="none" fill="#000" style="white-space:pre">(CV)</text>
<line x1="195.5" y1="560" x2="195.5" y2="578" stroke-width="1"/>
<line x1="204.5" y1="560" x2="204.5" y2="578" stroke-width="1"/>
<line x1="214.5" y1="560" x2="214.5" y2="578" stroke-width="1"/>
<line x1="224.5" y1="560" x2="224.5" y2="578" stroke-width="1"/>
<polyline points="192.5,562.5 192.5,566 208.5,572 208.5,575.5" stroke-width="1"/>
<polyline points="209.5,563.5 209.5,567 225.5,573 225.5,576.5" stroke-width="1"/>
<line x1="286.5" y1="560" x2="286.5" y2="671" stroke-width="1"/>
<line x1="296.5" y1="560" x2="296.5" y2="671" stroke-width="1"/>
<line x1="305.5" y1="560" x2="305.5" y2="671" stroke-width="1"/>
<line x1="315.5" y1="560" x2="315.5" y2="671" stroke-width="1"/>
<polyline points="284.5,596.5 284.5,600 300.5,607 300.5,610.5" stroke-width="1"/>
<polyline points="302.5,597.5 302.5,601 318.5,608 318.5,611.5" stroke-width="1"/>
<rect x="144.5" y="577.5" width="39.0" height="17.0" stroke-width="1" fill="none"/>
<line x1="154.5" y1="577.5" x2="154.5" y2="594.5" stroke-width="1"/>
<line x1="164.5" y1="577.5" x2="164.5" y2="594.5" stroke-width="1"/>
<line x1="173.5" y1="577.5" x2="173.5" y2="594.5" stroke-width="1"/>
<text x="147" y="588" font-size="6" font-weight="bold" letter-spacing="0" stroke="none" fill="#000" style="white-space:pre">4</text>
<text x="157" y="588" font-size="6" font-weight="bold" letter-spacing="0" stroke="none" fill="#000" style="white-space:pre">5</text>
<text x="167" y="588" font-size="6" font-weight="bold" letter-spacing="0" stroke="none" fill="#000" style="white-space:pre">1</text>
<text x="176" y="588" font-size="6" font-weight="bold" letter-spacing="0" stroke="none" fill="#000" style="white-space:pre">2</text>
<text x="115" y="589" font-size="10" font-weight="normal" letter-spacing="-0.6" stroke="none" fill="#000" style="white-space:pre">H8-10</text>
<polyline points="148.0,578.0 149.5,580.0 151.0,578.0" stroke-width="1"/>
<circle cx="149.5" cy="593.0" r="1.3" stroke-width="0.9" fill="none"/>
<polyline points="158.0,578.0 159.5,580.0 161.0,578.0" stroke-width="1"/>
<circle cx="159.5" cy="593.0" r="1.3" stroke-width="0.9" fill="none"/>
<polyline points="167.0,578.0 168.5,580.0 170.0,578.0" stroke-width="1"/>
<circle cx="168.5" cy="593.0" r="1.3" stroke-width="0.9" fill="none"/>
<polyline points="177.0,578.0 178.5,580.0 180.0,578.0" stroke-width="1"/>
<circle cx="178.5" cy="593.0" r="1.3" stroke-width="0.9" fill="none"/>
<rect x="190.5" y="577.5" width="38.0" height="17.0" stroke-width="1" fill="none"/>
<line x1="200.5" y1="577.5" x2="200.5" y2="594.5" stroke-width="1"/>
<line x1="209.5" y1="577.5" x2="209.5" y2="594.5" stroke-width="1"/>
<line x1="219.5" y1="577.5" x2="219.5" y2="594.5" stroke-width="1"/>
<text x="193" y="588" font-size="6" font-weight="bold" letter-spacing="0" stroke="none" fill="#000" style="white-space:pre">4</text>
<text x="203" y="588" font-size="6" font-weight="bold" letter-spacing="0" stroke="none" fill="#000" style="white-space:pre">5</text>
<text x="212" y="588" font-size="6" font-weight="bold" letter-spacing="0" stroke="none" fill="#000" style="white-space:pre">1</text>
<text x="222" y="588" font-size="6" font-weight="bold" letter-spacing="0" stroke="none" fill="#000" style="white-space:pre">2</text>
<text x="232" y="591" font-size="10" font-weight="normal" letter-spacing="-0.5" stroke="none" fill="#000" style="white-space:pre">H8-1</text>
<polyline points="194.0,578.0 195.5,580.0 197.0,578.0" stroke-width="1"/>
<circle cx="195.5" cy="593.0" r="1.3" stroke-width="0.9" fill="none"/>
<polyline points="203.0,578.0 204.5,580.0 206.0,578.0" stroke-width="1"/>
<circle cx="204.5" cy="593.0" r="1.3" stroke-width="0.9" fill="none"/>
<polyline points="213.0,578.0 214.5,580.0 216.0,578.0" stroke-width="1"/>
<circle cx="214.5" cy="593.0" r="1.3" stroke-width="0.9" fill="none"/>
<polyline points="223.0,578.0 224.5,580.0 226.0,578.0" stroke-width="1"/>
<circle cx="224.5" cy="593.0" r="1.3" stroke-width="0.9" fill="none"/>
<line x1="149.5" y1="594.5" x2="149.5" y2="671" stroke-width="1"/>
<line x1="159.5" y1="594.5" x2="159.5" y2="671" stroke-width="1"/>
<line x1="168.5" y1="594.5" x2="168.5" y2="671" stroke-width="1"/>
<line x1="178.5" y1="594.5" x2="178.5" y2="671" stroke-width="1"/>
<line x1="195.5" y1="594.5" x2="195.5" y2="671" stroke-width="1"/>
<line x1="204.5" y1="594.5" x2="204.5" y2="671" stroke-width="1"/>
<line x1="214.5" y1="594.5" x2="214.5" y2="671" stroke-width="1"/>
<line x1="224.5" y1="594.5" x2="224.5" y2="671" stroke-width="1"/>
<polyline points="147.5,596.5 147.5,600 162.5,606.5 162.5,610.0" stroke-width="1"/>
<polyline points="165.5,597.5 165.5,601 182.5,609 182.5,612.5" stroke-width="1"/>
<polyline points="192.5,596.5 192.5,600 208.5,606.5 208.5,610.0" stroke-width="1"/>
<polyline points="211.5,598.5 211.5,602 228.5,610 228.5,613.5" stroke-width="1"/>
<text transform="translate(146,658) rotate(-90)" font-size="5.5" font-weight="bold" letter-spacing="0.2" stroke="none" fill="#000">C1 · BN/GN · 0.5</text>
<text transform="translate(156,658) rotate(-90)" font-size="5.5" font-weight="bold" letter-spacing="0.3" stroke="none" fill="#000">C2 · GN · 0.5</text>
<text transform="translate(165,658) rotate(-90)" font-size="5.5" font-weight="bold" letter-spacing="0.3" stroke="none" fill="#000">C3 · WH · 0.5</text>
<text transform="translate(175,658) rotate(-90)" font-size="5.5" font-weight="bold" letter-spacing="0.2" stroke="none" fill="#000">C4 · BN/BU · 0.5</text>
<text transform="translate(192,658) rotate(-90)" font-size="5.5" font-weight="bold" letter-spacing="0.3" stroke="none" fill="#000">C5 · GY · 0.5</text>
<text transform="translate(201,658) rotate(-90)" font-size="5.5" font-weight="bold" letter-spacing="0.2" stroke="none" fill="#000">C6 · BN/RD · 0.5</text>
<text transform="translate(211,658) rotate(-90)" font-size="5.5" font-weight="bold" letter-spacing="0.2" stroke="none" fill="#000">C7 · GN/BK · 0.5</text>
<text transform="translate(221,658) rotate(-90)" font-size="5.5" font-weight="bold" letter-spacing="0.2" stroke="none" fill="#000">C8 · WH/BK · 0.5</text>
<polyline points="144.5,672.5 253,672.5 255,675 257,672.5 318.5,672.5" stroke-width="1"/>
<polyline points="241.5,675 241.5,683.5 208.5,683.5 208.5,702.5 250.5,702.5 250.5,675" stroke-width="1"/>
<rect x="222" y="698" width="8" height="8" stroke-width="2" fill="none"/>
<polygon points="222,706 214.5,713.5 237.5,713.5 229.5,706" stroke-width="1" fill="none"/>
<text x="216" y="695" font-size="5" font-weight="bold" letter-spacing="0" stroke="none" fill="#000" style="white-space:pre">1</text>
<text x="232" y="693" font-size="5" font-weight="bold" letter-spacing="0" stroke="none" fill="#000" style="white-space:pre">2</text>
<text x="212" y="726" font-size="9" font-weight="normal" letter-spacing="0.6" stroke="none" fill="#000" style="white-space:pre">266RL</text>
<polyline points="260.5,675 260.5,701.5 310.5,701.5 310.5,682.5 269.5,682.5 269.5,675" stroke-width="1"/>
<rect x="285.5" y="697" width="8.0" height="8.5" stroke-width="1.5" fill="none"/>
<text x="279" y="693" font-size="5" font-weight="bold" letter-spacing="0" stroke="none" fill="#000" style="white-space:pre">2</text>
<text x="297" y="693" font-size="5" font-weight="bold" letter-spacing="0" stroke="none" fill="#000" style="white-space:pre">1</text>
<line x1="298" y1="709" x2="300.5" y2="711.5" stroke-width="1"/>
<text x="274" y="725" font-size="9" font-weight="normal" letter-spacing="0.0" stroke="none" fill="#000" style="white-space:pre">266RR</text>
<text x="384" y="117" font-size="10" font-weight="normal" letter-spacing="-0.4" stroke="none" fill="#000" style="white-space:pre">633</text>
<rect x="358" y="122" width="75" height="126" stroke-width="2" fill="none"/>
<path d="M373.5,140.5 V128.5 H407.5 V140.5" fill="none" stroke-width="1" stroke-dasharray="2.5,1.5"/>
<rect x="393.5" y="126.5" width="11.0" height="4.0" stroke-width="1" fill="none"/>
<rect x="393.5" y="139.5" width="11.0" height="4.0" stroke-width="1" fill="none"/>
<line x1="385.5" y1="126.0" x2="385.5" y2="131.0" stroke-width="1.5"/>
<line x1="387" y1="126.0" x2="387" y2="131.0" stroke-width="1.5"/>
<line x1="379" y1="131.5" x2="383" y2="128.5" stroke-width="1"/>
<line x1="385.5" y1="138.5" x2="385.5" y2="143.5" stroke-width="1.5"/>
<line x1="387" y1="138.5" x2="387" y2="143.5" stroke-width="1.5"/>
<line x1="379" y1="144" x2="383" y2="141" stroke-width="1"/>
<polyline points="425.5,248 425.5,140.5 361.5,140.5 361.5,243.5 387,243.5" stroke-width="1"/>
<polyline points="367.5,150.5 415.5,150.5" stroke-width="1"/>
<rect x="381.5" y="148.5" width="10.0" height="4.0" stroke-width="1" fill="#fff"/>
<line x1="367.5" y1="150.5" x2="367.5" y2="173" stroke-width="1"/>
<line x1="406.5" y1="150.5" x2="406.5" y2="161.5" stroke-width="1"/>
<text x="375" y="159" font-size="6" font-weight="bold" letter-spacing="0" stroke="none" fill="#000" style="white-space:pre">h</text>
<text x="392" y="159" font-size="6" font-weight="bold" letter-spacing="0" stroke="none" fill="#000" style="white-space:pre">g</text>
<polyline points="366,161.5 372,161.5 377,159 381,161.5 393,161.5 398,159 403,161.5 406.5,161.5" stroke-width="1"/>
<rect x="368.5" y="166.5" width="10.0" height="4.0" stroke-width="1" fill="none"/>
<polyline points="361.5,173.5 386.5,173.5 386.5,161.5" stroke-width="1"/>
<line x1="415.5" y1="150.5" x2="415.5" y2="248" stroke-width="1"/>
<rect x="413.5" y="162.5" width="5.0" height="10.0" stroke-width="1" fill="#fff"/>
<rect x="381.5" y="176.5" width="10.0" height="4.0" stroke-width="1" fill="#fff"/>
<polyline points="367.5,178.5 406.5,178.5" stroke-width="1"/>
<line x1="367.5" y1="178.5" x2="367.5" y2="240.5" stroke-width="1"/>
<line x1="406.5" y1="178.5" x2="406.5" y2="248" stroke-width="1"/>
<line x1="386.5" y1="186" x2="386.5" y2="248" stroke-width="1"/>
<polyline points="367.5,187.5 372,187.5 377,185.0 381,187.5 392,187.5 397,185.0 401,187.5 406.5,187.5" stroke-width="1"/>
<rect x="375" y="187.0" width="2" height="2.0" fill="#000" stroke="none"/>
<rect x="395" y="187.0" width="2" height="2.0" fill="#000" stroke="none"/>
<polyline points="367.5,201.5 372,201.5 377,199.0 381,201.5 392,201.5 397,199.0 401,201.5 406.5,201.5" stroke-width="1"/>
<rect x="375" y="201.0" width="2" height="2.0" fill="#000" stroke="none"/>
<rect x="395" y="201.0" width="2" height="2.0" fill="#000" stroke="none"/>
<polyline points="367.5,216.5 372,216.5 377,213.5 381,216.5 392,216.5 397,213.5 401,216.5 406.5,216.5" stroke-width="1"/>
<rect x="375" y="215.5" width="2" height="2.0" fill="#000" stroke="none"/>
<rect x="395" y="215.5" width="2" height="2.0" fill="#000" stroke="none"/>
<polyline points="367.5,229.5 372,229.5 377,227.0 381,229.5 392,229.5 397,227.0 401,229.5 406.5,229.5" stroke-width="1"/>
<rect x="375" y="229.0" width="2" height="2.0" fill="#000" stroke="none"/>
<rect x="395" y="229.0" width="2" height="2.0" fill="#000" stroke="none"/>
<text x="375" y="184" font-size="6" font-weight="bold" letter-spacing="0" stroke="none" fill="#000" style="white-space:pre">b</text>
<text x="392" y="184" font-size="6" font-weight="bold" letter-spacing="0" stroke="none" fill="#000" style="white-space:pre">k</text>
<text x="375" y="198" font-size="6" font-weight="bold" letter-spacing="0" stroke="none" fill="#000" style="white-space:pre">c</text>
<text x="392" y="198" font-size="6" font-weight="bold" letter-spacing="0" stroke="none" fill="#000" style="white-space:pre">d</text>
<text x="375" y="212" font-size="6" font-weight="bold" letter-spacing="0" stroke="none" fill="#000" style="white-space:pre">a</text>
<text x="392" y="212" font-size="6" font-weight="bold" letter-spacing="0" stroke="none" fill="#000" style="white-space:pre">f</text>
<text x="376" y="226" font-size="6" font-weight="bold" letter-spacing="0" stroke="none" fill="#000" style="white-space:pre">i</text>
<text x="392" y="226" font-size="6" font-weight="bold" letter-spacing="0" stroke="none" fill="#000" style="white-space:pre">e</text>
<rect x="365.5" y="189.5" width="3.0" height="9.0" stroke-width="1" fill="#fff"/>
<rect x="404.5" y="189.5" width="4.0" height="9.0" stroke-width="1" fill="#fff"/>
<rect x="365.5" y="204.5" width="3.0" height="9.0" stroke-width="1" fill="#fff"/>
<rect x="404.5" y="204.5" width="4.0" height="9.0" stroke-width="1" fill="#fff"/>
<rect x="365.5" y="218.5" width="3.0" height="9.0" stroke-width="1" fill="#fff"/>
<rect x="404.5" y="218.5" width="4.0" height="9.0" stroke-width="1" fill="#fff"/>
<rect x="365.5" y="231.5" width="3.0" height="9.0" stroke-width="1" fill="#fff"/>
<rect x="404.5" y="231.5" width="4.0" height="9.0" stroke-width="1" fill="#fff"/>
<text x="387" y="247" font-size="5" font-weight="bold" letter-spacing="0" stroke="none" fill="#000" style="white-space:pre">2</text>
<text x="406" y="247" font-size="5" font-weight="bold" letter-spacing="0" stroke="none" fill="#000" style="white-space:pre">1</text>
<text x="415.5" y="247" font-size="5" font-weight="bold" letter-spacing="0" stroke="none" fill="#000" style="white-space:pre">4</text>
<text x="425" y="247" font-size="5" font-weight="bold" letter-spacing="0" stroke="none" fill="#000" style="white-space:pre">5</text>
<circle cx="347" cy="186.5" r="6.5" stroke-width="1" fill="none"/>
<rect x="343" y="185.5" width="8" height="2.0" fill="#000" stroke="none"/>
<circle cx="345" cy="186.5" r="1.5" stroke-width="1" fill="#000"/>
<circle cx="349" cy="186.5" r="1.5" stroke-width="1" fill="#000"/>
<circle cx="347" cy="202.5" r="6.5" stroke-width="1" fill="none"/>
<rect x="343" y="201.5" width="8" height="2.0" fill="#000" stroke="none"/>
<circle cx="347" cy="202.5" r="1.5" stroke-width="1" fill="#000"/>
<rect x="336.5" y="211.5" width="18.0" height="9.0" stroke-width="1" fill="none"/>
<rect x="340" y="214" width="11" height="3.5" fill="#000" stroke="none"/>
<rect x="343.5" y="223.5" width="9.0" height="10.0" stroke-width="1" fill="none"/>
<path d="M344.5,228 Q347,224 349,227 T352,232" fill="none" stroke-width="1"/>
<rect x="439.5" y="183.5" width="10.0" height="11.5" stroke-width="1.2" fill="none"/>
<path d="M441,194 L442,188 L445,190 L447,185" fill="none" stroke-width="1.5"/>
<rect x="435.5" y="198.5" width="18.0" height="8.0" stroke-width="1" fill="none"/>
<rect x="440" y="201.5" width="9" height="2.0" fill="#000" stroke="none"/>
<circle cx="443.5" cy="215.5" r="6.5" stroke-width="1" fill="none"/>
<line x1="439" y1="215.5" x2="448" y2="215.5" stroke-width="1"/>
<circle cx="443.5" cy="230.5" r="6.5" stroke-width="1" fill="none"/>
<line x1="439" y1="230.5" x2="448" y2="230.5" stroke-width="1"/>
<line x1="443.5" y1="226" x2="443.5" y2="235" stroke-width="1"/>
<polyline points="387.5,248 387.5,258.5 534.5,258.5 534.5,719" stroke-width="1"/>
<polyline points="406.5,248 406.5,254.5 390.5,254.5 390.5,306" stroke-width="1"/>
<polyline points="400.5,306 400.5,262.5 525.5,262.5 525.5,702.5 471.5,702.5 471.5,719" stroke-width="1"/>
<line x1="425.5" y1="248" x2="425.5" y2="306" stroke-width="1"/>
<text transform="translate(386,300) rotate(-90)" font-size="5.5" font-weight="bold" letter-spacing="0.5" stroke="none" fill="#000">C1 WH 0.5</text>
<text transform="translate(423,300) rotate(-90)" font-size="5.5" font-weight="bold" letter-spacing="0.5" stroke="none" fill="#000">C2 YE 0.5</text>
<text transform="translate(393,302) rotate(-90)" font-size="5" font-weight="bold" letter-spacing="0.5" stroke="none" fill="#000">K26</text>
<text transform="translate(403,302) rotate(-90)" font-size="5" font-weight="bold" letter-spacing="0.5" stroke="none" fill="#000">K26</text>
<text transform="translate(428,302) rotate(-90)" font-size="5" font-weight="bold" letter-spacing="0.5" stroke="none" fill="#000">K26</text>
<rect x="378" y="306" width="60" height="42" stroke-width="2" fill="none" stroke-dasharray="4.5,3"/>
<circle cx="385.5" cy="319.5" r="6" stroke-width="1.2" fill="none"/>
<line x1="381.5" y1="315.5" x2="389.5" y2="323.5" stroke-width="1"/>
<line x1="381.5" y1="323.5" x2="389.5" y2="315.5" stroke-width="1"/>
<line x1="380.5" y1="319.5" x2="390.5" y2="319.5" stroke-width="0.8"/>
<line x1="383.5" y1="314" x2="390.5" y2="321" stroke-width="0.7"/>
<line x1="380.5" y1="318" x2="387.5" y2="325" stroke-width="0.7"/>
<line x1="385.5" y1="325.5" x2="385.5" y2="330.5" stroke-width="1"/>
<circle cx="400.5" cy="319.5" r="6" stroke-width="1.2" fill="none"/>
<line x1="396.5" y1="315.5" x2="404.5" y2="323.5" stroke-width="1"/>
<line x1="396.5" y1="323.5" x2="404.5" y2="315.5" stroke-width="1"/>
<line x1="395.5" y1="319.5" x2="405.5" y2="319.5" stroke-width="0.8"/>
<line x1="398.5" y1="314" x2="405.5" y2="321" stroke-width="0.7"/>
<line x1="395.5" y1="318" x2="402.5" y2="325" stroke-width="0.7"/>
<line x1="400.5" y1="325.5" x2="400.5" y2="330.5" stroke-width="1"/>
<circle cx="414.5" cy="319.5" r="6" stroke-width="1.2" fill="none"/>
<line x1="410.5" y1="315.5" x2="418.5" y2="323.5" stroke-width="1"/>
<line x1="410.5" y1="323.5" x2="418.5" y2="315.5" stroke-width="1"/>
<line x1="409.5" y1="319.5" x2="419.5" y2="319.5" stroke-width="0.8"/>
<line x1="412.5" y1="314" x2="419.5" y2="321" stroke-width="0.7"/>
<line x1="409.5" y1="318" x2="416.5" y2="325" stroke-width="0.7"/>
<line x1="414.5" y1="325.5" x2="414.5" y2="330.5" stroke-width="1"/>
<circle cx="429.5" cy="319.5" r="6" stroke-width="1.2" fill="none"/>
<line x1="425.5" y1="315.5" x2="433.5" y2="323.5" stroke-width="1"/>
<line x1="425.5" y1="323.5" x2="433.5" y2="315.5" stroke-width="1"/>
<line x1="424.5" y1="319.5" x2="434.5" y2="319.5" stroke-width="0.8"/>
<line x1="427.5" y1="314" x2="434.5" y2="321" stroke-width="0.7"/>
<line x1="424.5" y1="318" x2="431.5" y2="325" stroke-width="0.7"/>
<line x1="429.5" y1="325.5" x2="429.5" y2="330.5" stroke-width="1"/>
<line x1="385.5" y1="306" x2="385.5" y2="313.5" stroke-width="1"/>
<line x1="400.5" y1="306" x2="400.5" y2="313.5" stroke-width="1"/>
<line x1="414.5" y1="306" x2="414.5" y2="313.5" stroke-width="1"/>
<line x1="429.5" y1="306" x2="429.5" y2="313.5" stroke-width="1"/>
<rect x="382.5" y="330.5" width="49.0" height="13.0" stroke-width="1" fill="none"/>
<circle cx="407" cy="337" r="4" stroke-width="1.2" fill="none"/>
<line x1="405" y1="339" x2="409" y2="335" stroke-width="1"/>
<text x="412" y="339.5" font-size="5" font-weight="bold" letter-spacing="-0.3" stroke="none" fill="#000" style="white-space:pre">/05a</text>
<text x="441" y="334" font-size="10" font-weight="normal" letter-spacing="-0.4" stroke="none" fill="#000" style="white-space:pre">703</text>
<text x="402" y="338" font-size="5" font-weight="normal" letter-spacing="0" stroke="none" fill="#000" style="white-space:pre"></text>
<text x="403" y="360" font-size="5.5" font-weight="bold" letter-spacing="-0.2" stroke="none" fill="#000" style="white-space:pre">-BUS</text>
<line x1="405.5" y1="348" x2="405.5" y2="356" stroke-width="1"/>
<line x1="410.5" y1="348" x2="410.5" y2="356" stroke-width="1"/>
<line x1="403" y1="355.5" x2="413" y2="355.5" stroke-width="1"/>
<polyline points="465.5,389 465.5,403.5 431.5,403.5 431.5,410" stroke-width="1"/>
<polyline points="474.5,389 474.5,401.5 499.5,401.5 499.5,410" stroke-width="1"/>
<path d="M461,389.5 Q461,387.5 464,387.5 L468,387.5 Q470.5,387.5 470.5,385.5 Q470.5,387.5 473,387.5 L477,387.5 Q479.5,387.5 479.5,389.5" fill="none" stroke-width="1"/>
<text x="454" y="384" font-size="5.5" font-weight="bold" letter-spacing="-0.2" stroke="none" fill="#000" style="white-space:pre">(SD)</text>
<text x="474" y="384" font-size="5.5" font-weight="bold" letter-spacing="-0.2" stroke="none" fill="#000" style="white-space:pre">(CV)</text>
<rect x="426" y="410" width="32" height="18" stroke-width="2" fill="none" stroke-dasharray="4.5,2.5"/>
<text x="404" y="421" font-size="10" font-weight="normal" letter-spacing="0" stroke="none" fill="#000" style="white-space:pre">624</text>
<rect x="490" y="410" width="28" height="18" stroke-width="2" fill="none" stroke-dasharray="4.5,2.5"/>
<text x="464" y="421" font-size="10" font-weight="normal" letter-spacing="-0.5" stroke="none" fill="#000" style="white-space:pre">624a</text>
<polyline points="431.5,428 431.5,445.5 437.5,445.5 437.5,457" stroke-width="1"/>
<polyline points="441.5,428 441.5,445.5 444.5,445.5 444.5,457" stroke-width="1"/>
<line x1="450.5" y1="428" x2="450.5" y2="457" stroke-width="1"/>
<line x1="499.5" y1="428" x2="499.5" y2="469" stroke-width="1"/>
<line x1="508.5" y1="428" x2="508.5" y2="469" stroke-width="1"/>
<line x1="499.5" y1="438.5" x2="508.5" y2="438.5" stroke-width="1"/>
<circle cx="499.5" cy="438.5" r="1.5" stroke-width="1" fill="#fff"/>
<rect x="430" y="450" width="28" height="46" stroke-width="2" fill="none"/>
<rect x="433.5" y="456.5" width="8.0" height="33.0" stroke-width="1" fill="none"/>
<line x1="433.5" y1="461.5" x2="441.5" y2="461.5" stroke-width="1"/>
<line x1="433.5" y1="465.5" x2="441.5" y2="465.5" stroke-width="1"/>
<line x1="433.5" y1="470.5" x2="441.5" y2="470.5" stroke-width="1"/>
<line x1="433.5" y1="475.5" x2="441.5" y2="475.5" stroke-width="1"/>
<line x1="433.5" y1="480.5" x2="441.5" y2="480.5" stroke-width="1"/>
<line x1="433.5" y1="484.5" x2="441.5" y2="484.5" stroke-width="1"/>
<rect x="441.5" y="456.5" width="3.0" height="33.0" stroke-width="1" fill="none"/>
<rect x="446.5" y="456.5" width="8.0" height="33.0" stroke-width="1" fill="none"/>
<line x1="450" y1="456.5" x2="450" y2="489.5" stroke-width="2"/>
<line x1="452.5" y1="456.5" x2="452.5" y2="489.5" stroke-width="1"/>
<text x="410" y="477" font-size="10" font-weight="normal" letter-spacing="-0.4" stroke="none" fill="#000" style="white-space:pre">625</text>
<line x1="437.5" y1="489.5" x2="437.5" y2="508" stroke-width="1"/>
<rect x="428" y="508" width="18" height="18" stroke-width="2" fill="none"/>
<rect x="427.5" y="507.5" width="3.0" height="19.0" fill="#000" stroke="none"/>
<text x="449" y="518" font-size="10" font-weight="normal" letter-spacing="-0.4" stroke="none" fill="#000" style="white-space:pre">644</text>
<line x1="437.5" y1="526" x2="437.5" y2="533.5" stroke-width="1"/>
<line x1="433" y1="533.5" x2="442" y2="533.5" stroke-width="1.2"/>
<line x1="435.5" y1="534" x2="433.5" y2="537" stroke-width="1"/>
<line x1="438.5" y1="534" x2="436.5" y2="537" stroke-width="1"/>
<line x1="441.5" y1="534" x2="439.5" y2="537" stroke-width="1"/>
<text x="427" y="548" font-size="9" font-weight="normal" letter-spacing="-0.2" stroke="none" fill="#000" style="white-space:pre">G49</text>
<rect x="490" y="470" width="28" height="16" stroke-width="2" fill="none"/>
<circle cx="504" cy="478" r="4" stroke-width="1.5" fill="none"/>
<line x1="503" y1="475" x2="503" y2="481" stroke-width="1.5"/>
<text x="463" y="482" font-size="10" font-weight="normal" letter-spacing="0" stroke="none" fill="#000" style="white-space:pre">624b</text>
<text x="476" y="454" font-size="10" font-weight="normal" letter-spacing="0" stroke="none" fill="#000" style="white-space:pre">364</text>
<polyline points="490,459.5 492.5,462.5 495,459.5" stroke-width="1"/>
<line x1="492.5" y1="462.5" x2="492.5" y2="466" stroke-width="1"/>
<rect x="489" y="466" width="7" height="3" fill="#000" stroke="none"/>
<text transform="translate(523,540) rotate(-90)" font-size="5.5" font-weight="bold" letter-spacing="0.5" stroke="none" fill="#000">P3 BK 0.5</text>
<text transform="translate(532,540) rotate(-90)" font-size="5.5" font-weight="bold" letter-spacing="0.5" stroke="none" fill="#000">C3 BK 0.5</text>
<text transform="translate(384,495) rotate(-90)" font-size="5.5" font-weight="bold" letter-spacing="0.5" stroke="none" fill="#000">A1 GY 0.5</text>
<rect x="346" y="588" width="58" height="28" stroke-width="2" fill="none"/>
<text x="359" y="603" font-size="9" font-weight="normal" letter-spacing="0.4" stroke="none" fill="#000" style="white-space:pre">624RL</text>
<rect x="431" y="588" width="58" height="28" stroke-width="2" fill="none"/>
<text x="444" y="603" font-size="9" font-weight="normal" letter-spacing="0.0" stroke="none" fill="#000" style="white-space:pre">624RR</text>
<line x1="404" y1="601.5" x2="431" y2="601.5" stroke-width="1"/>
<rect x="405" y="600" width="4.5" height="3.5" fill="#000" stroke="none"/>
<rect x="425.5" y="600" width="4.5" height="3.5" fill="#000" stroke="none"/>
<line x1="388.5" y1="616" x2="388.5" y2="640" stroke-width="1"/>
<line x1="455.5" y1="616" x2="455.5" y2="638" stroke-width="1"/>
<polygon points="374.5,640 404,640 392.5,668.5 374.5,668.5" stroke-width="1" fill="none"/>
<polygon points="376.5,642.5 401,642.5 390.5,666.5 376.5,666.5" stroke-width="1" fill="none"/>
<text x="372" y="678" font-size="9" font-weight="normal" letter-spacing="0.4" stroke="none" fill="#000" style="white-space:pre">625RL</text>
<polygon points="441.5,638.5 470,638.5 459,667.5 441.5,667.5" stroke-width="1" fill="none"/>
<polygon points="443.5,640.5 467,640.5 457,665.5 443.5,665.5" stroke-width="1" fill="none"/>
<text x="439" y="677" font-size="9" font-weight="normal" letter-spacing="0.2" stroke="none" fill="#000" style="white-space:pre">625RR</text>
<polyline points="481.5,719 481.5,711.5 525.5,711.5 525.5,719" stroke-width="1"/>
<text x="486" y="709" font-size="6" font-weight="bold" letter-spacing="-0.2" stroke="none" fill="#000" style="white-space:pre">551  BK  0.5</text>
<line x1="471.0" y1="719.5" x2="482.0" y2="719.5" stroke-width="1.2"/>
<line x1="474.5" y1="720" x2="472.5" y2="723" stroke-width="1"/>
<line x1="477.5" y1="720" x2="475.5" y2="723" stroke-width="1"/>
<line x1="480.5" y1="720" x2="478.5" y2="723" stroke-width="1"/>
<line x1="524.5" y1="719.5" x2="535.5" y2="719.5" stroke-width="1.2"/>
<line x1="528" y1="720" x2="526" y2="723" stroke-width="1"/>
<line x1="531" y1="720" x2="529" y2="723" stroke-width="1"/>
<line x1="534" y1="720" x2="532" y2="723" stroke-width="1"/>
<text x="462" y="733" font-size="9" font-weight="normal" letter-spacing="0.1" stroke="none" fill="#000" style="white-space:pre">G47B</text>
<text x="515" y="733" font-size="9" font-weight="normal" letter-spacing="0.1" stroke="none" fill="#000" style="white-space:pre">G47A</text>
<text x="522" y="741" font-size="5" font-weight="bold" letter-spacing="-0.3" stroke="none" fill="#000" style="white-space:pre">TBC UD</text>
<text x="522" y="747" font-size="5" font-weight="bold" letter-spacing="-0.3" stroke="none" fill="#000" style="white-space:pre">(GOD)</text></svg>
<div class="a" style="left:592px;top:757px;width:24px;height:24px;border:1px solid;border-color:#fff #8C8A7E #8C8A7E #fff;background:#EEEBDF"><svg class="a" style="left:3px;top:3px" width="17" height="17" viewBox="0 0 17 17"><circle cx="6.5" cy="6.5" r="5" fill="#E8F5EE" stroke="#000" stroke-width="1.6"/><path d="M4 6.5H9M6.5 4V9" stroke="#000" stroke-width="1.4"/><path d="M10 10L15 15" stroke="#000" stroke-width="2.4"/></svg></div>
<div class="a" style="left:616px;top:757px;width:24px;height:24px;border:1px solid;border-color:#fff #8C8A7E #8C8A7E #fff;background:#EEEBDF"><svg class="a" style="left:3px;top:3px" width="17" height="17" viewBox="0 0 17 17"><circle cx="6.5" cy="6.5" r="5" fill="#9FE0B8" stroke="#000" stroke-width="1.6"/><path d="M4 6.5H9" stroke="#000" stroke-width="1.4"/><path d="M10 10L15 15" stroke="#000" stroke-width="2.4"/></svg></div>

<div class="a hl" style="top:155px;height:1px"></div>
<div class="a hl" style="top:234px;height:1px"></div>
<div class="a hl" style="top:277px;height:1px"></div>
<div class="a hl" style="top:356px;height:1px"></div>
<div class="a hl" style="top:465px;height:1px"></div>
<div class="a hl" style="top:544px;height:1px"></div>
<div class="a hl" style="top:603px;height:1px"></div>
<div class="a hl" style="top:646px;height:1px"></div>
<div class="a hl" style="top:689px;height:1px"></div>
<div class="a hl" style="top:732px;height:1px"></div>
<div class="a rt" style="left:678px;top:102px;line-height:16px;letter-spacing:0.8px;transform:scaleX(1.13);transform-origin:0 0">H33-1</div>
<div class="a rt" style="left:678px;top:240px;line-height:16px;letter-spacing:0.77px;transform:scaleX(1.13);transform-origin:0 0">H102-1</div>
<div class="a rt" style="left:678px;top:361px;line-height:16px;letter-spacing:0.24px;transform:scaleX(1.13);transform-origin:0 0">J76</div>
<div class="a rt" style="left:678px;top:550px;line-height:16px;letter-spacing:-0.3px;transform:scaleX(1.13);transform-origin:0 0">G41</div>
<div class="a rt" style="left:678px;top:609px;line-height:16px;letter-spacing:0.1px;transform:scaleX(1.13);transform-origin:0 0">G47A</div>
<div class="a rt" style="left:678px;top:652px;line-height:16px;letter-spacing:0.0px;transform:scaleX(1.13);transform-origin:0 0">G47B</div>
<div class="a rt" style="left:678px;top:695px;line-height:16px;letter-spacing:-0.2px;transform:scaleX(1.13);transform-origin:0 0">G49</div>
<div class="a rt" style="left:794px;top:102px;line-height:16px;letter-spacing:0.72px;transform:scaleX(1.13);transform-origin:0 0">Connettore nero sulla mensola presso il lato sinistro</div>
<div class="a rt" style="left:794px;top:118px;line-height:16px;letter-spacing:0.82px;transform:scaleX(1.13);transform-origin:0 0">del commutatore di accensione</div>
<div class="a rt" style="left:794px;top:197px;line-height:16px;letter-spacing:1.05px;font-weight:bold;transform:scaleX(1.13);transform-origin:0 0">Connettore a 102 pin</div>
<div class="a rt" style="left:794px;top:240px;line-height:16px;letter-spacing:0.89px;transform:scaleX(1.13);transform-origin:0 0">Sotto il montante A di sinistra</div>
<div class="a rt" style="left:794px;top:318px;line-height:16px;letter-spacing:0.72px;font-weight:bold;transform:scaleX(1.13);transform-origin:0 0">Giunti</div>
<div class="a rt" style="left:794px;top:361px;line-height:16px;letter-spacing:0.73px;transform:scaleX(1.13);transform-origin:0 0"><b>LHD:</b> A circa 40 mm dalla derivazione</div>
<div class="a rt" style="left:794px;top:377px;line-height:16px;letter-spacing:0.64px;transform:scaleX(1.13);transform-origin:0 0">dell'accendisigari verso il punto di massa G41</div>
<div class="a rt" style="left:794px;top:411px;line-height:16px;letter-spacing:0.76px;transform:scaleX(1.13);transform-origin:0 0"><b>RHD:</b> A circa 130 mm dalla derivazione del punto di</div>
<div class="a rt" style="left:794px;top:427px;line-height:16px;letter-spacing:0.64px;transform:scaleX(1.13);transform-origin:0 0">massa G43 verso la radio</div>
<div class="a rt" style="left:794px;top:507px;line-height:16px;letter-spacing:0.93px;font-weight:bold;transform:scaleX(1.13);transform-origin:0 0">Punti di massa</div>
<div class="a rt" style="left:794px;top:550px;line-height:16px;letter-spacing:0.7px;transform:scaleX(1.13);transform-origin:0 0">Nel vano della strumentazione sulla destra della barra</div>
<div class="a rt" style="left:794px;top:566px;line-height:16px;letter-spacing:0.67px;transform:scaleX(1.13);transform-origin:0 0">paraginocchia</div>
<div class="a rt" style="left:794px;top:609px;line-height:16px;letter-spacing:0.75px;transform:scaleX(1.13);transform-origin:0 0">Nel volante</div>
<div class="a rt" style="left:794px;top:652px;line-height:16px;letter-spacing:0.75px;transform:scaleX(1.13);transform-origin:0 0">Nel volante</div>
<div class="a rt" style="left:794px;top:695px;line-height:16px;letter-spacing:0.72px;transform:scaleX(1.13);transform-origin:0 0">Nel montante C sinistro</div>
<svg class="a" style="left:1159px;top:101px" width="13" height="10" viewBox="0 0 13 10"><path d="M0 3H7V0L12 5L7 10V7H0Z" fill="#0000F0"/></svg>
<svg class="a" style="left:1159px;top:239px" width="13" height="10" viewBox="0 0 13 10"><path d="M0 3H7V0L12 5L7 10V7H0Z" fill="#0000F0"/></svg>
<svg class="a" style="left:1159px;top:361px" width="13" height="10" viewBox="0 0 13 10"><path d="M0 3H7V0L12 5L7 10V7H0Z" fill="#0000F0"/></svg>
<svg class="a" style="left:1159px;top:549px" width="13" height="10" viewBox="0 0 13 10"><path d="M0 3H7V0L12 5L7 10V7H0Z" fill="#0000F0"/></svg>
<svg class="a" style="left:1159px;top:608px" width="13" height="10" viewBox="0 0 13 10"><path d="M0 3H7V0L12 5L7 10V7H0Z" fill="#0000F0"/></svg>
<svg class="a" style="left:1159px;top:651px" width="13" height="10" viewBox="0 0 13 10"><path d="M0 3H7V0L12 5L7 10V7H0Z" fill="#0000F0"/></svg>
<svg class="a" style="left:1159px;top:694px" width="13" height="10" viewBox="0 0 13 10"><path d="M0 3H7V0L12 5L7 10V7H0Z" fill="#0000F0"/></svg>
<div class="a" style="left:1261px;top:101px;width:18px;height:680px;background:linear-gradient(90deg,#F3F1EC,#FDFDFA 30%,#F3F1EC)"></div>
<div class="a" style="left:1262px;top:102px;width:15px;height:17px;border:1px solid #fff;border-radius:2px;background:linear-gradient(135deg,#DCE6FD,#B6CAF6)"><svg class="a" style="left:0;top:0" width="15" height="15"><path d="M4 9L7.5 5.5L11 9" fill="none" stroke="#4D6185" stroke-width="2.2"/></svg></div>
<div class="a" style="left:1262px;top:763px;width:15px;height:17px;border:1px solid #fff;border-radius:2px;background:linear-gradient(135deg,#DCE6FD,#B6CAF6)"><svg class="a" style="left:0;top:0" width="15" height="15"><path d="M4 6L7.5 9.5L11 6" fill="none" stroke="#4D6185" stroke-width="2.2"/></svg></div>
<div class="a" style="left:1262px;top:622px;width:15px;height:139px;border:1px solid #fff;border-radius:2px;background:linear-gradient(90deg,#C6D5FB,#BACCFA 50%,#B0C4F5)"><div class="a" style="left:4px;top:63px;width:6px;height:1px;background:#EEF3FF;box-shadow:0 2px 0 #EEF3FF,0 4px 0 #EEF3FF,0 6px 0 #EEF3FF"></div></div>
<!-- status bar -->
<div class="a sb" style="left:0;width:141px"><span style="display:inline-block;transform:scaleX(1.18);transform-origin:0 0">9-3 (9440) 2006</span></div>
<div class="a sb" style="left:143px;width:249px"><span style="display:inline-block;transform:scaleX(1.18);transform-origin:0 0">Schemi elettrici</span></div>
<div class="a sb" style="left:394px;width:252px"><span style="display:inline-block;transform:scaleX(1.18);transform-origin:0 0">Schema elettrico</span></div>
<div class="a sb" style="left:647px;width:542px"><span style="display:inline-block;transform:scaleX(1.18);transform-origin:0 0">Audio, unità principale</span></div>
<div class="a sb" style="left:1190px;width:27px"></div>
<div class="a sb" style="left:1218px;width:29px"></div>
<div class="a sb" style="left:1248px;width:32px"></div>
<div class="a" style="left:0;top:798px;width:1280px;height:2px;background:#3272D6"></div>
</body></html>
